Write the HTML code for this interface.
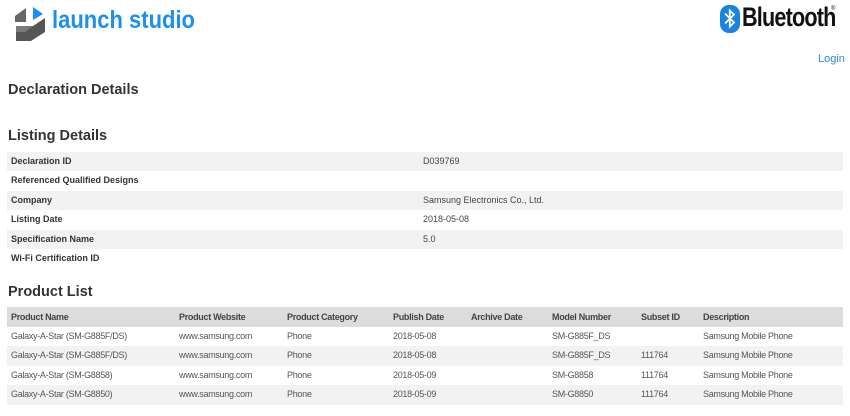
<!DOCTYPE html>
<html><head><meta charset="utf-8"><style>
*{margin:0;padding:0;box-sizing:border-box}
body{width:850px;height:416px;background:#fff;font-family:"Liberation Sans",Arial,sans-serif;color:#333;position:relative;overflow:hidden}
.abs{position:absolute}
h2{position:absolute;left:8px;font-size:14.5px;font-weight:bold;color:#333}
.tbl{position:absolute;left:7px;width:836px}
.row{height:19.4px;position:relative;font-size:9px;line-height:19.4px}
.row.g{background:#f2f2f2}
.row span{position:absolute;top:0;white-space:nowrap}
.lab{left:4px;font-weight:bold;color:#333}
.val{left:416px;color:#444}
.pl .row span{letter-spacing:-0.3px;color:#555}
.pl .hd{background:#dcdcdc;height:20px;line-height:20px}
.pl .hd span{font-weight:bold;color:#444}
</style></head><body>
<svg class="abs" style="left:13px;top:4px" width="34" height="38" viewBox="0 0 34 38">
<polygon points="2,12 13,4 13,18 2,18" fill="#666"/>
<polygon points="20,3 30,10 20,16" fill="#1a8cff"/>
<polygon points="3,22 20,22 32,14 32,28 18,37 3,37 3,30" fill="#555"/>
<polygon points="3,22 20,22 12,28 3,28" fill="#7a7a7a"/>
</svg>
<div class="abs" style="left:52px;top:6px;font-size:25px;font-weight:bold;color:#1e8ff0;transform:scaleX(0.88);transform-origin:left">launch studio</div>
<svg class="abs" style="left:720px;top:5px" width="20" height="28" viewBox="0 0 20 28">
<rect x="0" y="0" width="20" height="28" rx="9" fill="#1a82e0"/>
<path d="M5,8.5 L14,17.5 L9.8,21.5 L9.8,5.5 L14,9.5 L5,18.5" fill="none" stroke="#fff" stroke-width="1.8"/>
</svg>
<div class="abs" style="left:742px;top:2px;font-size:27px;font-weight:bold;color:#111;letter-spacing:-1px;transform:scaleX(0.8);transform-origin:left">Bluetooth</div>
<div class="abs" style="left:831px;top:6px;font-size:6px;color:#111">®</div>
<div class="abs" style="left:818px;top:53px;font-size:11px;color:#2a8be0">Login</div>
<h2 style="top:82px">Declaration Details</h2>
<h2 style="top:128px">Listing Details</h2>
<div class="tbl" style="top:152px">
<div class="row g"><span class="lab">Declaration ID</span><span class="val">D039769</span></div>
<div class="row"><span class="lab">Referenced Qualified Designs</span></div>
<div class="row g"><span class="lab">Company</span><span class="val">Samsung Electronics Co., Ltd.</span></div>
<div class="row"><span class="lab">Listing Date</span><span class="val">2018-05-08</span></div>
<div class="row g"><span class="lab">Specification Name</span><span class="val">5.0</span></div>
<div class="row"><span class="lab">Wi-Fi Certification ID</span></div>
</div>
<h2 style="top:284px">Product List</h2>
<div class="tbl pl" style="top:307px">
<div class="row hd"><span style="left:4px">Product Name</span><span style="left:172px">Product Website</span><span style="left:280px">Product Category</span><span style="left:386px">Publish Date</span><span style="left:464px">Archive Date</span><span style="left:545px">Model Number</span><span style="left:634px">Subset ID</span><span style="left:696px">Description</span></div>
<div class="row"><span style="left:4px">Galaxy-A-Star (SM-G885F/DS)</span><span style="left:172px">www.samsung.com</span><span style="left:280px">Phone</span><span style="left:386px">2018-05-08</span><span style="left:545px">SM-G885F_DS</span><span style="left:696px">Samsung Mobile Phone</span></div>
<div class="row g"><span style="left:4px">Galaxy-A-Star (SM-G885F/DS)</span><span style="left:172px">www.samsung.com</span><span style="left:280px">Phone</span><span style="left:386px">2018-05-08</span><span style="left:545px">SM-G885F_DS</span><span style="left:634px">111764</span><span style="left:696px">Samsung Mobile Phone</span></div>
<div class="row"><span style="left:4px">Galaxy-A-Star (SM-G8858)</span><span style="left:172px">www.samsung.com</span><span style="left:280px">Phone</span><span style="left:386px">2018-05-09</span><span style="left:545px">SM-G8858</span><span style="left:634px">111764</span><span style="left:696px">Samsung Mobile Phone</span></div>
<div class="row g"><span style="left:4px">Galaxy-A-Star (SM-G8850)</span><span style="left:172px">www.samsung.com</span><span style="left:280px">Phone</span><span style="left:386px">2018-05-09</span><span style="left:545px">SM-G8850</span><span style="left:634px">111764</span><span style="left:696px">Samsung Mobile Phone</span></div>
</div>
</body></html>
